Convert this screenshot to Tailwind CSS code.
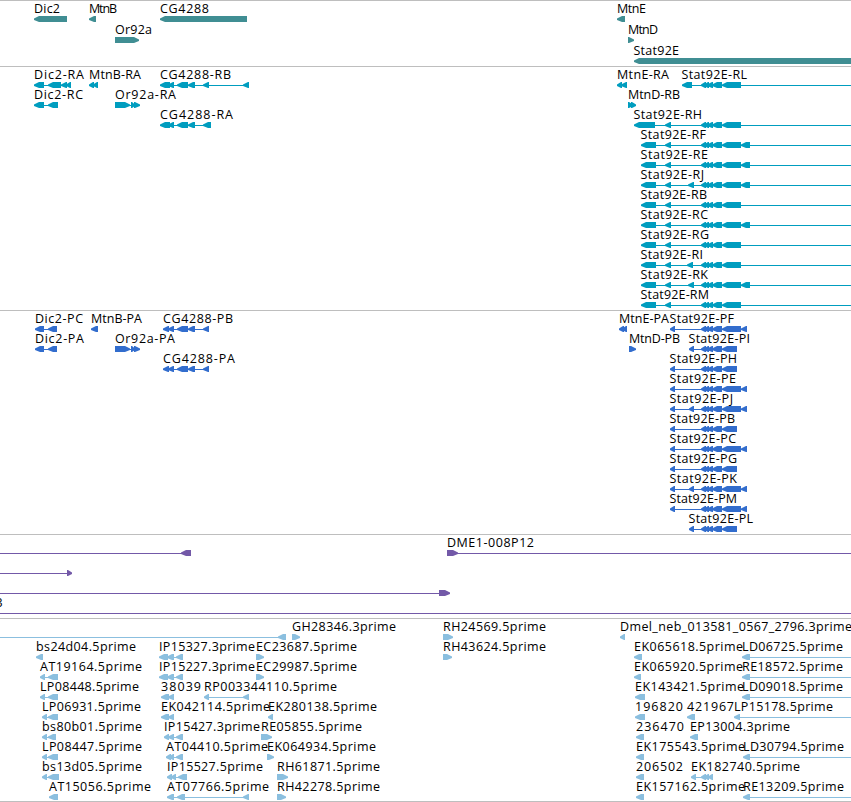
<!DOCTYPE html>
<html lang="en">
  <head>
    <meta charset="UTF-8" />
    <meta name="viewport" content="width=device-width, initial-scale=1.0" />
    <title>Genome Browser</title>
    <script src="https://cdn.jsdelivr.net/npm/@tailwindcss/browser@4"></script>
  </head>
  <body class="bg-white overflow-hidden">
    <main class="flex flex-col w-[851px] h-[802px] overflow-hidden font-['Open_Sans','Noto_Sans',sans-serif] text-[12.5px] text-black">
      <section class="h-[66px] border-t border-[#bebebe]">
        <svg id="genes" class="block w-full h-full fill-[#408e93]"></svg>
      </section>
      <section class="h-[244px] border-t border-[#bebebe]">
        <svg id="mrna" class="block w-full h-full fill-[#009dbf]"></svg>
      </section>
      <section class="h-[224px] border-t border-[#bebebe]">
        <svg id="cds" class="block w-full h-full fill-[#326dcd]"></svg>
      </section>
      <section class="h-[84px] border-t border-[#bebebe]">
        <svg id="bac" class="block w-full h-full fill-[#7359a8]"></svg>
      </section>
      <section class="h-[183px] border-t border-[#bebebe]">
        <svg id="est" class="block w-full h-full fill-[#8bbfdf]"></svg>
      </section>
      <div class="border-t border-[#bebebe]"></div>
    </main>

    <script>
      const END = 852;

      // exons shared by the Stat92E transcripts
      const core = [[701, 706], [704, 709], [707, 713], [712, 722]];
      const long = [...core, [722, 741]];
      const short = [...core, [722, 737]];

      const rna = (name, right, extra, tail) => [
        [name, 640.5, right, "L", [[641, 656], [665, 671], ...extra, ...long, ...tail], [641, END]],
      ];
      const cds = (name, right, exons) => [name, 669.5, right, "L", [[670, 675], ...exons]];
      const cg = [[163, 169], [168, 174], [177, 188], [188, 195], [203, 209]];
      const last = [[741, 750]];
      const lastCds = [[741, 747]];

      // feature: [label, left, label right, strand, blocks, line]
      const genes = [
        [
          ["Dic2", 34, 60, "L", [[34, 67]]],
          ["MtnB", 89, 117, "L", [[89, 96]]],
          ["CG4288", 160, 209, "L", [[160, 247]]],
          ["MtnE", 617, 646, "L", [[617, 625]]],
        ],
        [
          ["Or92a", 115, 152, "R", [[115, 139]]],
          ["MtnD", 628, 658, "R", [[628, 634]]],
        ],
        [["Stat92E", 633.5, 679, "L", [[634, END]]]],
      ];

      const mrna = [
        [
          ["Dic2-RA", 34, 84, "L", [[34, 44], [48, 61], [61, 67], [66, 71]]],
          ["MtnB-RA", 89, 141, "L", [[89, 94], [93, 98]]],
          ["CG4288-RB", 160, 231, "L", [[160, 170], [168, 174], [177, 188], [188, 195], [203, 209], [243, 249]]],
          ["MtnE-RA", 617, 669, "L", [[617, 622], [621, 627]]],
          ["Stat92E-RL", 681.5, 747, "L", [[682, 692], ...long], [682, END]],
        ],
        [
          ["Dic2-RC", 34, 83, "L", [[34, 44], [48, 58]]],
          ["Or92a-RA", 115, 176, "R", [[115, 130], [131, 135], [134, 140]]],
          ["MtnD-RB", 628, 680, "R", [[628, 633], [631, 636]]],
        ],
        [
          ["CG4288-RA", 160, 233, "L", [[160, 170], [168, 174], [177, 188], [188, 195], [203, 211]]],
          ["Stat92E-RH", 633.5, 702, "L", [[634, 655], [665, 671], ...long], [634, END]],
        ],
        rna("Stat92E-RF", 706, [], last),
        rna("Stat92E-RE", 708, [], last),
        rna("Stat92E-RJ", 704, [[688, 694]], last),
        rna("Stat92E-RB", 707, [], []),
        rna("Stat92E-RC", 708, [], last),
        rna("Stat92E-RG", 709, [], []),
        rna("Stat92E-RI", 703, [[687, 693]], []),
        rna("Stat92E-RK", 708, [[688, 694]], last),
        rna("Stat92E-RM", 709, [], []),
      ];

      const proteins = [
        [
          ["Dic2-PC", 35, 83, "L", [[35, 44], [48, 57]]],
          ["MtnB-PA", 91, 142, "L", [[91, 98]]],
          ["CG4288-PB", 163, 233, "L", cg],
          ["MtnE-PA", 619, 669, "L", [[619, 624], [622, 627]]],
          cds("Stat92E-PF", 734, [...long, ...lastCds]),
        ],
        [
          ["Dic2-PA", 35, 84, "L", [[35, 44], [48, 57]]],
          ["Or92a-PA", 115, 175, "R", [[115, 130], [131, 135], [134, 140]]],
          ["MtnD-PB", 629, 680, "R", [[629, 634], [630, 636]]],
          ["Stat92E-PI", 688.5, 750, "L", [[689, 694], ...short]],
        ],
        [
          ["CG4288-PA", 163, 235, "L", cg],
          cds("Stat92E-PH", 737, short),
        ],
        [cds("Stat92E-PE", 736, [...long, ...lastCds])],
        [cds("Stat92E-PJ", 733, [[689, 694], ...long, ...lastCds])],
        [cds("Stat92E-PB", 735, short)],
        [cds("Stat92E-PC", 736, [...long, ...lastCds])],
        [cds("Stat92E-PG", 737, short)],
        [cds("Stat92E-PK", 737, [[689, 694], ...long, ...lastCds])],
        [cds("Stat92E-PM", 737, [...long, ...lastCds])],
        [["Stat92E-PL", 688.5, 753, "L", [[689, 694], ...short]]],
      ];

      const bac = [
        [
          ["", 0, 0, "L", [[181, 191]], [0, 182]],
          ["DME1-008P12", 447, 534, "R", [[447, 458]], [447, END]],
        ],
        [["", 0, 0, "R", [[67, 72]], [0, 68]]],
        [["", 0, 0, "R", [[439, 450]], [0, 440]]],
        [["3", -4.5, 3, "R", [], [0, END]]],
      ];

      const est = [
        [
          ["", 0, 0, "L", [[278, 286]], [0, 280]],
          ["GH28346.3prime", 292, 396, "R", [[292, 300]]],
          ["RH24569.5prime", 443, 546, "R", [[443, 453]]],
          ["Dmel_neb_013581_0567_2796.3prime", 620, 852, "L", [[620, 625]]],
        ],
        [
          ["bs24d04.5prime", 36, 136, "L", [[36, 43]]],
          ["IP15327.3prime", 159, 255, "L", [[159, 168], [167, 174], [176, 183]]],
          ["EC23687.5prime", 256, 357, "R", [[256, 264]]],
          ["RH43624.5prime", 443, 546, "R", [[443, 452]]],
          ["EK065618.5prime", 634, 743, "L", [[634, 642]]],
          ["LD06725.5prime", 742, 843, "L", [[742, 750]], [742, END]],
        ],
        [
          ["AT19164.5prime", 40, 142, "L", [[40, 45], [48, 58]]],
          ["IP15227.3prime", 159, 255, "L", [[159, 168], [167, 174], [176, 183]]],
          ["EC29987.5prime", 256, 357, "R", [[256, 264]]],
          ["EK065920.5prime", 634, 743, "L", [[634, 641]]],
          ["RE18572.5prime", 742, 843, "L", [[742, 750]], [742, END]],
        ],
        [
          ["LP08448.5prime", 40, 139, "L", [[40, 45], [48, 58]]],
          ["38039", 161, 201, "L", [[161, 169], [168, 174]]],
          ["RP003344110.5prime", 204, 337, "L", [[204, 209], [243, 249]]],
          ["EK143421.5prime", 635, 744, "L", [[635, 645]]],
          ["LD09018.5prime", 742, 843, "L", [[742, 750]], [742, END]],
        ],
        [
          ["LP06931.5prime", 42, 141, "L", [[42, 47], [48, 58]]],
          ["EK042114.5prime", 161, 270, "L", [[161, 169], [168, 174]]],
          ["EK280138.5prime", 268, 377, "L", [[268, 273]]],
          ["196820", 635, 683, "L", [[635, 645]]],
          ["421967", 687, 734, "L", [[687, 695]]],
          ["LP15178.5prime", 734, 833, "L", [[734, 740]], [734, END]],
        ],
        [
          ["bs80b01.5prime", 42, 142, "L", [[42, 47], [48, 56]]],
          ["IP15427.3prime", 164, 260, "L", [[164, 169], [168, 174], [176, 183]]],
          ["RE05855.5prime", 261, 362, "R", [[261, 272]]],
          ["236470", 636, 684, "L", [[636, 644]]],
          ["EP13004.3prime", 690, 790, "L", [[690, 698]]],
        ],
        [
          ["LP08447.5prime", 42, 142, "L", [[42, 47], [48, 58]]],
          ["AT04410.5prime", 166, 268, "L", [[166, 171], [169, 174], [176, 183]]],
          ["EK064934.5prime", 267, 376, "R", [[267, 274]]],
          ["EK175543.5prime", 636, 745, "L", [[636, 644]]],
          ["LD30794.5prime", 743, 844, "L", [[743, 750]], [743, END]],
        ],
        [
          ["bs13d05.5prime", 42, 142, "L", [[42, 47], [48, 59]]],
          ["IP15527.5prime", 167, 263, "L", [[167, 172], [171, 176], [178, 187]]],
          ["RH61871.5prime", 277, 380, "R", [[277, 288]]],
          ["206502", 636, 683, "L", [[636, 644]]],
          ["EK182740.5prime", 691, 800, "L", [[691, 696], [701, 706], [704, 709], [708, 713]]],
        ],
        [
          ["AT15056.5prime", 49, 151, "L", [[49, 58]]],
          ["AT07766.5prime", 167, 269, "L", [[167, 174], [177, 185], [243, 249]]],
          ["RH42278.5prime", 277, 380, "R", [[277, 286]]],
          ["EK157162.5prime", 636, 745, "L", [[636, 644]]],
          ["RE13209.5prime", 743, 844, "L", [[743, 750]], [743, END]],
        ],
      ];

      // box with a blunt pointed end on the side of the strand
      function block(a, b, strand, y) {
        const head = Math.min(b - a - 1, 5);
        const t = y + 15;
        const e = y + 21;
        const pts =
          strand === "L"
            ? `${a},${t + 2.5} ${a + head},${t} ${b},${t} ${b},${e} ${a + head},${e} ${a},${t + 4}`
            : `${b},${t + 2.5} ${b - head},${t} ${a},${t} ${a},${e} ${b - head},${e} ${b},${t + 4}`;
        return `<polygon points="${pts}" />`;
      }

      function renderTrack(id, rows, pitch) {
        let out = "";
        rows.forEach((row, i) => {
          const y = i * pitch;
          row.forEach(([label, left, right, strand, blocks, line]) => {
            if (!line && blocks.length > 1) {
              line = [blocks[0][0], blocks[blocks.length - 1][1]];
            }
            if (line) {
              out += `<rect x="${line[0]}" y="${y + 18}" width="${line[1] - line[0]}" height="1" />`;
            }
            out += blocks.map(([a, b]) => block(a, b, strand, y)).join("");
            if (label) {
              out += `<text x="${left}" y="${y + 12}" textLength="${right - left}" class="fill-black">${label}</text>`;
            }
          });
        });
        document.getElementById(id).innerHTML = out;
      }

      renderTrack("genes", genes, 21);
      renderTrack("mrna", mrna, 20);
      renderTrack("cds", proteins, 20);
      renderTrack("bac", bac, 20);
      renderTrack("est", est, 20);
    </script>
  </body>
</html>
